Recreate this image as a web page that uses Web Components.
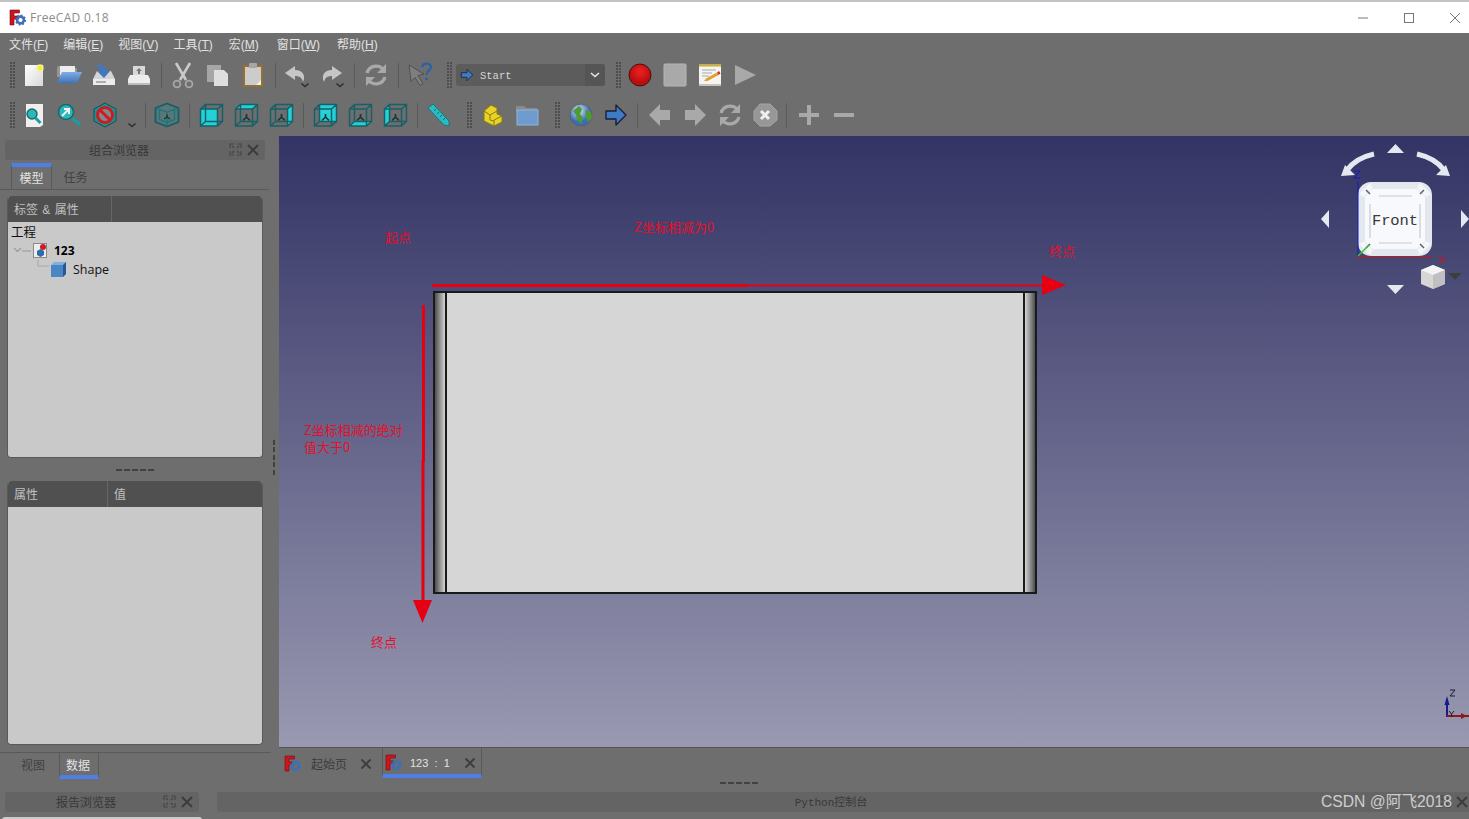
<!DOCTYPE html>
<html>
<head>
<meta charset="utf-8">
<title>FreeCAD 0.18</title>
<style>
  html, body { margin: 0; height: 100%; overflow: hidden; background: #6e6e6e; }
  body {
    display: flex;
    flex-direction: column;
    width: 1469px;
    height: 819px;
    font: 12px "Noto Sans", "Noto Sans CJK SC", sans-serif;
  }
  u { text-underline-offset: 1px; }
</style>
</head>
<body>
<fc-titlebar>FreeCAD 0.18</fc-titlebar>
<fc-menubar>
  <span>文件(<u>F</u>)</span><span>编辑(<u>E</u>)</span><span>视图(<u>V</u>)</span><span>工具(<u>T</u>)</span><span style="margin-left:1px">宏(<u>M</u>)</span><span style="margin-left:3px">窗口(<u>W</u>)</span><span style="margin-left:2px">帮助(<u>H</u>)</span>
</fc-menubar>
<fc-toolbar style="height:40px">
  <fc-grip style="margin-right:1.5px"></fc-grip>
  <fc-tool name="new"></fc-tool><fc-tool name="open"></fc-tool><fc-tool name="save"></fc-tool><fc-tool name="print"></fc-tool>
  <fc-sep></fc-sep>
  <fc-tool name="cut"></fc-tool><fc-tool name="copy"></fc-tool><fc-tool name="paste"></fc-tool>
  <fc-sep></fc-sep>
  <fc-tool name="undo"></fc-tool><fc-tool name="redo"></fc-tool>
  <fc-sep></fc-sep>
  <fc-tool name="sync"></fc-tool>
  <fc-sep></fc-sep>
  <fc-tool name="whatsthis"></fc-tool>
  <fc-grip style="margin:0 4px 0 9.5px"></fc-grip>
  <fc-combo>Start</fc-combo>
  <fc-grip style="margin:0 1.5px 0 11px"></fc-grip>
  <fc-tool name="record"></fc-tool><fc-tool name="stop"></fc-tool><fc-tool name="notepad"></fc-tool><fc-tool name="play"></fc-tool>
</fc-toolbar>
<fc-toolbar style="height:40px;margin-bottom:1px">
  <fc-grip style="margin-right:1.5px"></fc-grip>
  <fc-tool name="fitall"></fc-tool><fc-tool name="fitsel"></fc-tool><fc-tool name="nodraw"></fc-tool>
  <fc-tool name="chevron" style="width:19px"></fc-tool>
  <fc-sep></fc-sep>
  <fc-tool name="iso"></fc-tool>
  <fc-sep></fc-sep>
  <fc-tool name="front"></fc-tool><fc-tool name="top"></fc-tool><fc-tool name="right"></fc-tool>
  <fc-sep></fc-sep>
  <fc-tool name="rear"></fc-tool><fc-tool name="bottom"></fc-tool><fc-tool name="left"></fc-tool>
  <fc-sep></fc-sep>
  <fc-tool name="measure"></fc-tool>
  <fc-grip style="margin:0 2px 0 10.5px"></fc-grip>
  <fc-tool name="part"></fc-tool><fc-tool name="folder"></fc-tool>
  <fc-grip style="margin:0 3px 0 11px"></fc-grip>
  <fc-tool name="globe"></fc-tool><fc-tool name="arrow"></fc-tool>
  <fc-sep></fc-sep>
  <fc-tool name="back"></fc-tool><fc-tool name="forward"></fc-tool><fc-tool name="sync"></fc-tool><fc-tool name="cancel"></fc-tool>
  <fc-sep></fc-sep>
  <fc-tool name="plus"></fc-tool><fc-tool name="minus"></fc-tool>
</fc-toolbar>
<fc-workspace>
  <fc-combo-view slot="left"></fc-combo-view>
  <fc-viewport slot="view">
    <fc-note x="106" y="92">起点</fc-note>
    <fc-note x="355" y="82">Z坐标相减为0</fc-note>
    <fc-note x="770" y="106">终点</fc-note>
    <fc-note x="25" y="285">Z坐标相减的绝对<br>值大于0</fc-note>
    <fc-note x="92" y="497">终点</fc-note>
  </fc-viewport>
  <fc-doc-tabs slot="view"></fc-doc-tabs>
</fc-workspace>
<fc-bottom-docks></fc-bottom-docks>

<script>
// icon drawings, all on a 28x28 box
const gearLogo = `
  <path d="M1 1h9.500v3H5v3h4.500v3H5v6H1z" fill="#d0141c" stroke="#6d0c10" stroke-width=".6"/>
  <circle cx="11.500" cy="11" r="3.400" fill="none" stroke="#3f6fb5" stroke-width="2.600"/>
  <circle cx="11.500" cy="11" r="4.800" fill="none" stroke="#3f6fb5" stroke-width="1.600" stroke-dasharray="1.800 1.900"/>`;

const cubeFaces = {
  front: '3.5,8 20.5,8 20.5,25 3.5,25',
  top: '3.5,8 8.5,3.5 25.5,3.5 20.5,8',
  right: '20.5,8 25.5,3.5 25.5,20.5 20.5,25',
  rear: '8.5,3.5 25.5,3.5 25.5,20.5 8.5,20.5',
  bottom: '3.5,25 8.5,20.5 25.5,20.5 20.5,25',
  left: '3.5,8 8.5,3.5 8.5,20.5 3.5,25'
};

function cube(face) {
  const axes = face === 'front' ? '' :
    '<path d="M14.500 16v-3M14.500 16l-3.500 3.500M14.500 16l3.500 3.500" stroke="#1c3436" stroke-width="1.700" fill="none"/>';
  return `
    <polygon points="${cubeFaces[face]}" fill="#22d2d8"/>
    ${axes}
    <path d="M3.500 8h17v17h-17zM8.500 3.500h17v17h-17zM3.500 8l5-4.500M20.500 8l5-4.500M20.500 25l5-4.500M3.500 25l5-4.500"
      fill="none" stroke="#186067" stroke-width="1.500" stroke-linejoin="round"/>`;
}

const syncArrows = `
  <g fill="none" stroke="#a9a9a9" stroke-width="3.200">
    <path d="M5 12a9.500 9.500 0 0 1 16-4"/>
    <path d="M23 16a9.500 9.500 0 0 1-16 4"/>
  </g>
  <path d="M24 3v9h-9zM4 25v-9h9z" fill="#a9a9a9"/>`;

const chev = (x, y) => `<path d="M${x - 3.5} ${y - 1.5}l3.500 3 3.500-3" fill="none" stroke="#2f2f2f" stroke-width="1.600"/>`;

const icons = {
  new: `
    <defs><linearGradient id="p" x2="1" y2="1"><stop offset="0" stop-color="#fff"/><stop offset="1" stop-color="#d8d8d8"/></linearGradient></defs>
    <rect x="5" y="4" width="18" height="21" fill="url(#p)"/>
    <circle cx="20" cy="7" r="4" fill="#f6f28a" opacity=".6"/><circle cx="20" cy="7" r="2.400" fill="#f3ee2e"/>`,
  open: `
    <path d="M2 7l1-2h7l2 2h10v9H2z" fill="#969696"/>
    <path d="M5 5h15v9H5z" fill="#ececec"/>
    <defs><linearGradient id="b" x2="0" y2="1"><stop offset="0" stop-color="#82ade6"/><stop offset="1" stop-color="#3f74bb"/></linearGradient></defs>
    <path d="M7 11h20l-5 11H2z" fill="url(#b)"/>`,
  save: `
    <path d="M3 18l4-8h14l4 8v6H3z" fill="#d4d4d4"/>
    <path d="M3 18h22v6H3z" fill="#ececec"/><path d="M6 21h10" stroke="#9a9a9a" stroke-width="1.500"/>
    <path d="M5 4c6-1 11 1 12 6h3l-6 7-7-7h4c-1-3-3-5-6-6z" fill="#3f78c2"/>`,
  print: `
    <path d="M8 5h12v10H8z" fill="#d8d8d8"/>
    <path d="M14 7l3 3h-2v3h-2v-3h-2z" fill="#777"/>
    <path d="M5 14h18l2 4v6H3v-6z" fill="#ededed"/>
    <path d="M3 22h22v2H3z" fill="#bdbdbd"/>`,
  cut: `
    <g fill="none" stroke="#c9c9c9" stroke-width="2.600">
      <path d="M7 2l10 17M21 2L11 19"/>
    </g>
    <g fill="none" stroke="#a8a8a8" stroke-width="1.800"><circle cx="8" cy="23" r="3.400"/><circle cx="20" cy="23" r="3.400"/></g>`,
  copy: `
    <path d="M3 4h14v17H3z" fill="#a6a6a6"/>
    <path d="M10 9h10l4 4v12H10z" fill="#dedede"/>`,
  paste: `
    <rect x="4" y="4" width="20" height="22" rx="1" fill="#96702f"/>
    <path d="M6 6h16v18H6z" fill="#cccccc"/>
    <path d="M17 24l5-5v5z" fill="#eee"/>
    <rect x="10" y="2" width="8" height="5" rx="1" fill="#a6a6a6"/>`,
  undo: `
    <path d="M12 5L2 12l10 7v-4c5 0 7 2 8 6 3-6 0-12-8-12z" fill="#c6c6c6"/>${chev(22, 24)}`,
  redo: `
    <path d="M14 5l10 7-10 7v-4c-5 0-7 2-8 6-3-6 0-12 8-12z" fill="#c6c6c6"/>${chev(22, 24)}`,
  sync: syncArrows,
  whatsthis: `
    <path d="M3 4l15 9-6 1.500 5 8-3 2-5-8-4 4z" fill="#7e7e7e" stroke="#505050" stroke-width="1"/>
    <path d="M16 6c1-5 9-4 9 0 0 3.500-4.500 3.500-4.500 8" fill="none" stroke="#2a62a8" stroke-width="2.200"/>
    <circle cx="20.500" cy="18" r="1.500" fill="#2a62a8"/>`,
  record: `
    <defs><radialGradient id="r" cx=".5" cy=".35"><stop offset="0" stop-color="#f02020"/><stop offset="1" stop-color="#b80f0f"/></radialGradient></defs>
    <circle cx="14" cy="14" r="11" fill="url(#r)" stroke="#431313" stroke-width="1"/>`,
  stop: `<rect x="3" y="3" width="22" height="22" rx="1" fill="#a9a9a9" stroke="#b6b6b6"/>`,
  notepad: `
    <rect x="3" y="3" width="22" height="22" rx="1" fill="#f4f4f0"/>
    <path d="M3 3h22v2.500H3z" fill="#c9ad4c"/>
    <path d="M6 9h14M6 12h10M6 15h7" stroke="#a8a8a8" stroke-width="1"/>
    <path d="M8 20l2-2.500 11-6 1.500 2.500-11 6z" fill="#dca12f"/>
    <path d="M21 11.500l1.500 2.500 2-1.500-1.500-2.500z" fill="#cc3322"/>
    <path d="M3 23h22v2H3z" fill="#c4c4c4"/>`,
  play: `<path d="M4 4l21 10L4 24z" fill="#a9a9a9"/>`,
  fitall: `
    <path d="M6 3h17v21l-3 2H6z" fill="#efefef"/>
    <circle cx="12" cy="13" r="5" fill="#2bb6bc" stroke="#16696d" stroke-width="1.400"/>
    <path d="M15.500 17l5 5" stroke="#1e9aa0" stroke-width="3"/>`,
  fitsel: `
    <circle cx="11" cy="11" r="7.500" fill="#2bb6bc" stroke="#16696d" stroke-width="1.600"/>
    <path d="M7 15l6-6M9 8h5v5" fill="none" stroke="#f2f2f2" stroke-width="2"/>
    <path d="M17 17l8 7" stroke="#1e9aa0" stroke-width="3.400"/>`,
  nodraw: `
    <g transform="translate(1 0)">
    <path d="M14 2l11 6v12l-11 6-11-6V8z" fill="#1d8f95" stroke="#124f52" stroke-width="1"/>
    <circle cx="14" cy="14" r="7.500" fill="#7f8a8a" stroke="#d01a22" stroke-width="3"/>
    <path d="M9 9l10 10" stroke="#d01a22" stroke-width="3"/>
    </g>`,
  chevron: chev(15, 24),
  iso: `
    <path d="M14 2.500l11.500 4.500v14L14 25.500 2.500 21V7z" fill="#2a8b91" fill-opacity=".3" stroke="#155e64" stroke-width="1.800" stroke-linejoin="round"/>
    <path d="M2.500 7L14 11l11.500-4M14 11v14.500M6.500 9v9.500l7.500 3 7.500-3V9" fill="none" stroke="#18767c" stroke-width="1.300"/>
    <path d="M14 16v-2.500M14 16l-3 2M14 16l3 2" fill="none" stroke="#1c3436" stroke-width="1.400"/>`,
  front: cube('front'), top: cube('top'), right: cube('right'),
  rear: cube('rear'), bottom: cube('bottom'), left: cube('left'),
  measure: `
    <path d="M3 7l5-4 16 17v5l-5-1z" fill="#28bcc4" stroke="#186a70" stroke-width=".8"/>
    <path d="M9 10l2-2M12 13l2-2M15 16l2-2M18 19l2-2" stroke="#186a70" stroke-width="1"/>`,
  part: `
    <path d="M6 10l7-6 6 3v6l5 2v6l-8 4-10-5z" fill="#e8d228" stroke="#8a7a10" stroke-width="1"/>
    <path d="M6 10l6 4 7-4M12 14v5M16 25v-6l8-4M12 19l4 1" fill="none" stroke="#8a7a10" stroke-width="1"/>`,
  folder: `
    <path d="M3 5h8l2 2h11v5H3z" fill="#8a8a8a"/>
    <rect x="4" y="9" width="21" height="15" fill="#6f9ccf" stroke="#8fb3dc" stroke-width="1"/>`,
  globe: `
    <defs><radialGradient id="g" cx=".4" cy=".3"><stop offset="0" stop-color="#d8e6f6"/><stop offset="1" stop-color="#3a6db5"/></radialGradient></defs>
    <circle cx="14" cy="14" r="11" fill="url(#g)" stroke="#5a5a5a" stroke-width=".8"/>
    <path d="M6 10l6-5 3 3-2 5 3 4-2 6-4-4-1-5zM18 9l6 2 1 6-4 4-2-5z" fill="#4e9b2f"/>`,
  arrow: `<path d="M4 10h10V4l10 10-10 10v-6H4z" fill="#3f7ac4" stroke="#1b1f33" stroke-width="1.400" stroke-linejoin="round"/>`,
  back: `<path d="M24 9H14V3L3 14l11 11v-6h10z" fill="#a9a9a9"/>`,
  forward: `<path d="M4 9h10V3l11 11-11 11v-6H4z" fill="#a9a9a9"/>`,
  cancel: `
    <path d="M9 3h10l7 7v9l-7 6H9l-6-6v-9z" fill="#979797" stroke="#a5a5a5"/>
    <path d="M10 10l8 8M18 10l-8 8" stroke="#f0f0f0" stroke-width="3"/>`,
  plus: `<path d="M14 4v20M4 14h20" stroke="#a9a9a9" stroke-width="4"/>`,
  minus: `<path d="M4 14h20" stroke="#a9a9a9" stroke-width="4"/>`
};

class ShadowEl extends HTMLElement {
  constructor() {
    super();
    this.attachShadow({ mode: 'open' });
  }
  connectedCallback() {
    this.shadowRoot.innerHTML = this.markup();
  }
}

class FcTitlebar extends ShadowEl {
  markup() {
    return `
      <style>
        :host { display: flex; align-items: center; height: 31px; flex: none; background: #fff;
          border-top: 2px solid #c4c4c4; color: #8c8c8c; font: 12px "Open Sans", sans-serif; letter-spacing: .3px; overflow: hidden; }
        .logo { width: 17px; height: 17px; margin: 0 4px 0 9px; }
        .name { flex: 1; }
        .btns { display: flex; margin-right: -9px; }
        .btns svg { width: 46px; height: 14px; }
      </style>
      <svg class="logo" viewBox="0 0 17 17">${gearLogo}</svg>
      <span class="name"><slot></slot></span>
      <div class="btns">
        <svg viewBox="0 0 46 14"><path d="M18 7h10" stroke="#777"/></svg>
        <svg viewBox="0 0 46 14"><rect x="18.500" y="2.500" width="9" height="9" fill="none" stroke="#777"/></svg>
        <svg viewBox="0 0 46 14"><path d="M18 2l10 10M28 2L18 12" stroke="#777"/></svg>
      </div>`;
  }
}

class FcMenubar extends ShadowEl {
  markup() {
    return `
      <style>
        :host { display: flex; align-items: center; flex: none; height: 22px; padding: 0 0 1px 9px; box-sizing: border-box; color: #e2e2e2; }
        .row { display: flex; gap: 15px; font: 12px "Liberation Sans", "Noto Sans CJK SC", sans-serif; }
      </style>
      <div class="row"><slot></slot></div>`;
  }
}

class FcToolbar extends ShadowEl {
  markup() {
    return `
      <style>:host { display: flex; align-items: center; flex: none; padding-left: 10px; }</style>
      <slot></slot>`;
  }
}

class FcGrip extends ShadowEl {
  markup() {
    return `
      <style>
        :host { display: block; flex: none; width: 5px; height: 26px;
          background: radial-gradient(circle at 1px 1px, #4d4d4d 1px, transparent 1.200px) 0 0 / 3px 3px; }
      </style>`;
  }
}

class FcSep extends ShadowEl {
  markup() {
    return `
      <style>
        :host { display: flex; justify-content: center; flex: none; width: 9px; }
        i { width: 1px; height: 25px; background: #5a5a5a; }
      </style>
      <i></i>`;
  }
}

class FcTool extends ShadowEl {
  markup() {
    const name = this.getAttribute('name');
    return `
      <style>
        :host { display: flex; align-items: center; justify-content: center; flex: none; width: 35px; height: 28px; }
        svg { width: 28px; height: 28px; flex: none; }
      </style>
      <svg viewBox="0 0 28 28">${icons[name]}</svg>`;
  }
}

class FcCombo extends ShadowEl {
  markup() {
    return `
      <style>
        :host { display: flex; align-items: center; flex: none; width: 149px; height: 22px; box-sizing: border-box;
          background: #5c5c5c; border-radius: 3px; color: #d6d6d6; font: 10.500px "Liberation Mono", monospace; }
        svg.go { width: 16px; height: 16px; margin: 0 5px 0 3px; }
        span { flex: 1; padding-top: 1px; }
        .drop { width: 20px; height: 22px; background: #555; border-radius: 0 3px 3px 0; display: flex; align-items: center; justify-content: center; }
        .drop svg { width: 10px; height: 6px; }
      </style>
      <svg class="go" viewBox="0 0 28 28">${icons.arrow}</svg>
      <span><slot></slot></span>
      <div class="drop"><svg viewBox="0 0 10 6"><path d="M1 1l4 3.500 4-3.500" fill="none" stroke="#e6e6e6" stroke-width="1.600"/></svg></div>`;
  }
}

class FcWorkspace extends ShadowEl {
  markup() {
    return `
      <style>
        :host { display: grid; grid-template-columns: 279px 1fr; flex: none; height: 656px; }
        .left, .view { display: flex; flex-direction: column; min-width: 0; }
      </style>
      <div class="left"><slot name="left"></slot></div>
      <div class="view"><slot name="view"></slot></div>`;
  }
}

class FcDockTitle extends ShadowEl {
  markup() {
    return `
      <style>
        :host { display: flex; align-items: center; height: 20px; flex: none; background: #646464; border-radius: 3px;
          color: #383838; font: 12px "Noto Sans CJK SC", sans-serif; }
        .t { flex: 1; text-align: center; padding: 0 0 2px var(--title-pad, 4px); }
        svg { width: 36px; height: 14px; flex: none; }
      </style>
      <span class="t"><slot></slot></span>
      <svg viewBox="0 0 36 14">
        <path d="M1 5V1h4M8 1h4v4M12 8v4H8M5 12H1V8M3 3l2 2M10 3L8 5M10 10L8 8M3 10l2-2" fill="none" stroke="#474747" stroke-width="1.200"/>
        <path d="M19 2l10 10M29 2L19 12" stroke="#3c3c3c" stroke-width="2"/>
      </svg>`;
  }
}

class FcPanel extends ShadowEl {
  markup() {
    const first = this.getAttribute('first');
    const col = this.getAttribute('col') || '104';
    return `
      <style>
        :host { display: flex; flex-direction: column; flex: none; margin: 0 16px 0 7px; box-sizing: border-box;
          border-radius: 4px; overflow: hidden; background: #c9c9c9; border: solid #5a5a5a; border-width: 0 1px 1px; }
        .head { display: flex; height: 26px; flex: none; background: #505050; color: #c0c0c0;
          font: 12px/28px "Liberation Sans", "Noto Sans CJK SC", sans-serif; word-spacing: 1px; }
        .head span { padding-left: 6px; }
        .head span:first-child { width: ${col}px; flex: none; padding-left: 6px; border-right: 1px solid #666; }
        .body { flex: 1; color: #111; }
      </style>
      <div class="head"><span>${first}</span><span>${this.getAttribute('second') || ''}</span></div>
      <div class="body"><slot></slot></div>`;
  }
}

class FcTree extends ShadowEl {
  markup() {
    return `
      <style>
        :host { display: block; padding-left: 3px; font: 12.500px "Open Sans", "Noto Sans CJK SC", sans-serif; color: #111; }
        .row { display: flex; align-items: center; height: 18px; }
        .root { font-family: "Noto Sans CJK SC", sans-serif; height: 18px; }
        .doc { height: 19px; margin-top: 1px; }
        .b { font-weight: 700; margin-left: 5px; font-size: 12px; color: #000; }
        svg { flex: none; }
      </style>
      <div class="row root">工程</div>
      <div class="row doc">
        <svg width="38" height="19" viewBox="0 0 38 19">
          <path d="M3 7l3.500 3.500L10 7M11 10h9" fill="none" stroke="#9a9a9a" stroke-width="1.200"/>
          <rect x="22.500" y="2.500" width="13" height="14" fill="#ededed" stroke="#8a8a8a"/>
          <path d="M26 10l3.500-2 3.500 2v4l-3.500 2-3.500-2z" fill="#2f6bad"/>
          <circle cx="32" cy="6" r="3" fill="#cc1c24"/>
        </svg>
        <span class="b">123</span>
      </div>
      <div class="row">
        <svg width="58" height="19" viewBox="0 0 58 19">
          <path d="M27 0v6h11" fill="none" stroke="#a8a8a8" stroke-width="1"/>
          <path d="M40 5l3-3h12v12l-3 3z" fill="#7fb0e0"/>
          <path d="M40 5h12v12H40z" fill="#4a86c4"/><path d="M52 5l3-3v12l-3 3z" fill="#27598e"/>
        </svg>
        <span style="margin-left:4px">Shape</span>
      </div>`;
  }
}

class FcComboView extends ShadowEl {
  markup() {
    return `
      <style>
        :host { display: flex; flex-direction: column; height: 100%; padding-top: 4px; box-sizing: border-box;
          font: 12px "Noto Sans CJK SC", sans-serif; position: relative; }
        fc-dock-title { margin: 0 14px 0 5px; }
        .tabs { display: flex; height: 27px; flex: none; margin: 3px 10px 6px 0; border-bottom: 1px solid #5a5a5a; box-sizing: border-box; padding-left: 11px; }
        .tab { width: 41px; text-align: center; line-height: 27px; color: #414141; box-sizing: border-box; }
        .tab.on { color: #e2e2e2; border-top: 4px solid #4d7fe6; border-left: 1px solid #5a5a5a; border-right: 1px solid #5a5a5a; line-height: 21px; }
        .tab + .tab { margin-left: 3px; }
        .split { height: 23px; flex: none; display: flex; align-items: center; justify-content: center; margin-right: 9px; }
        .split i { width: 38px; height: 2px; background: repeating-linear-gradient(90deg, #414141 0 6px, transparent 6px 8px); }
        .vsplit { position: absolute; right: 4px; top: 302px; width: 2px; height: 37px;
          background: repeating-linear-gradient(0deg, #414141 0 5px, transparent 5px 7.500px); }
        .lower { display: flex; height: 27px; flex: none; margin-right: 8px; border-top: 1px solid #5a5a5a; margin-top: 7px; padding-left: 9px; color: #414141; line-height: 24px; box-sizing: border-box; }
        .lower div { width: 50px; padding-right: 2px; text-align: center; box-sizing: border-box; }
        .lower .on { width: 40px; padding-right: 2px; color: #e2e2e2; border: solid #5a5a5a; border-width: 0 1px; border-bottom: 4px solid #4d7fe6; line-height: 24px; }
      </style>
      <fc-dock-title>组合浏览器</fc-dock-title>
      <div class="tabs"><div class="tab on">模型</div><div class="tab">任务</div></div>
      <fc-panel first="标签 &amp; 属性" col="97" style="height:262px"><fc-tree></fc-tree></fc-panel>
      <div class="split"><i></i></div>
      <fc-panel first="属性" second="值" col="93" style="height:264px"></fc-panel>
      <div class="vsplit"></div>
      <div class="lower"><div>视图</div><div class="on">数据</div></div>`;
  }
}

class FcNote extends ShadowEl {
  markup() {
    return `
      <style>
        :host { position: absolute; left: ${this.getAttribute('x')}px; top: ${this.getAttribute('y')}px;
          color: #e3102a; font: 13px/17px "Noto Sans CJK SC", sans-serif; white-space: nowrap; }
      </style>
      <slot></slot>`;
  }
}

class FcShapeFace extends ShadowEl {
  markup() {
    return `
      <style>
        :host { position: absolute; left: 154px; top: 155px; width: 604px; height: 303px; box-sizing: border-box;
          display: flex; border: 2px solid #1a1a1a; background: #d6d6d6; }
        .l { width: 10px; background: linear-gradient(90deg, #4e4e4e, #d4d4d4); border-right: 2px solid #1a1a1a; }
        .r { width: 10px; background: linear-gradient(90deg, #d4d4d4, #4e4e4e); border-left: 2px solid #1a1a1a; }
        .m { flex: 1; }
      </style>
      <div class="l"></div><div class="m"></div><div class="r"></div>`;
  }
}

class FcNavcube extends ShadowEl {
  markup() {
    return `
      <style>
        :host { position: absolute; left: 1031px; top: 0; width: 159px; height: 170px; }
        svg { display: block; }
      </style>
      <svg width="159" height="170" viewBox="1310 136 159 170">
        <g fill="#e4e9f0">
          <path d="M1387 153l8.500-9 8.500 9zM1387 285h17l-8.500 9zM1329 210v18l-8-9zM1461 210v18l8-9z"/>
          <path d="M1341 176l14-1-10-10zM1450 176l-14-1 10-10z"/>
        </g>
        <g fill="none" stroke="#e4e9f0" stroke-width="5">
          <path d="M1374 154q-18 4-27 16"/>
          <path d="M1417 154q18 4 27 16"/>
        </g>
        <rect x="1358" y="182" width="74" height="74" rx="13" fill="#e3e8ef"/>
        <path d="M1373 189h44l8 8v44l-8 8h-44l-8-8v-44z" fill="#f8f9fc"/>
        <path d="M1370 183l-11 11 5 3 9-9zM1420 183l11 11-5 3-9-9zM1370 255l-11-11 5-3 9 9zM1420 255l11-11-5-3-9 9z" fill="#f4f6fa"/>
        <path d="M1366 190l4 4M1424 190l-4 4M1366 248l4-4M1424 248l-4-4" stroke="#55607a" stroke-width="1.500"/>
        <path d="M1379 196h33M1379 243h33M1370 204v34M1420 204v34" stroke="#c8cad4" stroke-width="1.200"/>
        <text x="1372" y="225" textLength="46" font-family="Liberation Mono, monospace" font-size="15.500" fill="#3a3a3a">Front</text>
        <path d="M1358 182v74" stroke="#1418c8"/>
        <path d="M1358 256.500h74" stroke="#c81414"/>
        <path d="M1358 256l11-11" stroke="#32c832" stroke-width="1.500"/>
        <path d="M1354 171h6l-6 7h6" fill="none" stroke="#1418c8"/>
        <path d="M1439 256l6 7M1445 256l-6 7" stroke="#d01414"/>
        <path d="M1433 265l12 5v14l-12 5-12-5v-14z" fill="#d6d6d6"/>
        <path d="M1433 265l12 5-12 5-12-5z" fill="#f4f4f4"/>
        <path d="M1433 275v14l12-5v-14z" fill="#c0c0c0"/>
        <path d="M1448 273h14l-7 7z" fill="#3e3e3e"/>
      </svg>`;
  }
}

class FcViewport extends ShadowEl {
  markup() {
    return `
      <style>
        :host { display: block; position: relative; flex: none; overflow: hidden;
          background: linear-gradient(#333365, #9999b2); border-bottom: 1px solid #555; height: 611px; }
        svg.over { position: absolute; left: 0; top: 0; }
      </style>
      <fc-shape-face></fc-shape-face>
      <svg class="over" width="1190" height="612" viewBox="279 136 1190 612">
        <g fill="#e60012">
          <rect x="432" y="284" width="316" height="3"/>
          <rect x="745" y="284.500" width="300" height="2"/>
          <path d="M1042 275l24 10-24 10z"/>
          <rect x="422" y="305" width="3" height="157"/>
          <rect x="421.500" y="460" width="3" height="145"/>
          <path d="M413 600h19l-9.500 23z"/>
        </g>
        <g fill="none">
          <path d="M1447 717v-18" stroke="#1a1a8c" stroke-width="2"/>
          <path d="M1447 716h22" stroke="#8c1a1a" stroke-width="2"/>
        </g>
        <path d="M1447 696l-2.500 9h5z" fill="#1a1a8c"/>
        <path d="M1461 713l6 3-6 3z" fill="#8c1a1a"/>
        <path d="M1450 690h5l-5 6h5" fill="none" stroke="#1a1a2a"/>
        <path d="M1449 711l2.500 3 2.500-3M1451.500 714v3" fill="none" stroke="#1a1a2a"/>
      </svg>
      <fc-navcube></fc-navcube>
      <slot></slot>`;
  }
}

class FcDocTabs extends ShadowEl {
  markup() {
    const logo = `<svg class="logo" viewBox="0 0 17 17">${gearLogo}</svg>`;
    const x = `<svg class="x" viewBox="0 0 12 12"><path d="M1.500 1.500l9 9M10.500 1.500l-9 9" stroke="#3e3e3e" stroke-width="2"/></svg>`;
    return `
      <style>
        :host { display: flex; flex-direction: column; flex: 1; position: relative; }
        .tabs { display: flex; height: 30px; flex: none; padding-left: 4px; font: 11px "Noto Sans CJK SC", sans-serif; }
        .tab { display: flex; align-items: center; height: 30px; box-sizing: border-box; }
        .logo { width: 17px; height: 17px; margin: 0 9px 0 1px; flex: none; }
        .x { width: 12px; height: 12px; flex: none; }
        .a { width: 99px; color: #3c3c3c; font-size: 12px; padding-top: 1px; }
        .a .t { width: 49px; margin-left: 1px; }
        .b { width: 100px; color: #e2e2e2; border: solid #5a5a5a; border-width: 0 1px; border-bottom: 4px solid #4d7fe6; padding: 3px 0 0 1px; }
        .b .logo { margin-right: 8px; }
        .b .t { width: 54px; font-family: "Liberation Sans", sans-serif; font-size: 11px; white-space: pre; }
        .split { height: 14px; padding: 4px 0 0 441px; box-sizing: border-box; }
        .split i { display: block; width: 38px; height: 2px; background: repeating-linear-gradient(90deg, #414141 0 6px, transparent 6px 8px); }
      </style>
      <div class="tabs">
        <div class="tab a">${logo}<span class="t">起始页</span>${x}</div>
        <div class="tab b">${logo}<span class="t">123  :  1</span>${x}</div>
      </div>
      <div class="split"><i></i></div>`;
  }
}

class FcBottomDocks extends ShadowEl {
  markup() {
    return `
      <style>
        :host { display: flex; flex: 1; position: relative; min-height: 0; overflow: hidden; }
        .report { width: 194px; margin-left: 5px; flex: none; }
        .report i { display: block; height: 5px; margin: 5px 0 0 -3px; width: 200px; background: #ccc; border-radius: 3px 3px 0 0; }
        .py { flex: 1; margin: 0 -5px 0 18px; --title-pad: 7px; }
        .py fc-dock-title { border-radius: 3px 0 0 3px; font: 11px "Liberation Mono", "Noto Sans CJK SC", monospace; }
        .mark { position: absolute; right: 17px; top: 0; color: rgba(226,226,226,.85);
          font: 15.700px/20px "Liberation Sans", "Noto Sans CJK SC", sans-serif; }
      </style>
      <div class="report"><fc-dock-title>报告浏览器</fc-dock-title><i></i></div>
      <div class="py"><fc-dock-title>Python控制台</fc-dock-title></div>
      <span class="mark">CSDN @阿飞2018</span>`;
  }
}

customElements.define('fc-dock-title', FcDockTitle);
customElements.define('fc-panel', FcPanel);
customElements.define('fc-tree', FcTree);
customElements.define('fc-titlebar', FcTitlebar);
customElements.define('fc-menubar', FcMenubar);
customElements.define('fc-toolbar', FcToolbar);
customElements.define('fc-grip', FcGrip);
customElements.define('fc-sep', FcSep);
customElements.define('fc-tool', FcTool);
customElements.define('fc-combo', FcCombo);
customElements.define('fc-workspace', FcWorkspace);
customElements.define('fc-combo-view', FcComboView);
customElements.define('fc-note', FcNote);
customElements.define('fc-shape-face', FcShapeFace);
customElements.define('fc-navcube', FcNavcube);
customElements.define('fc-viewport', FcViewport);
customElements.define('fc-doc-tabs', FcDocTabs);
customElements.define('fc-bottom-docks', FcBottomDocks);
</script>
</body>
</html>
